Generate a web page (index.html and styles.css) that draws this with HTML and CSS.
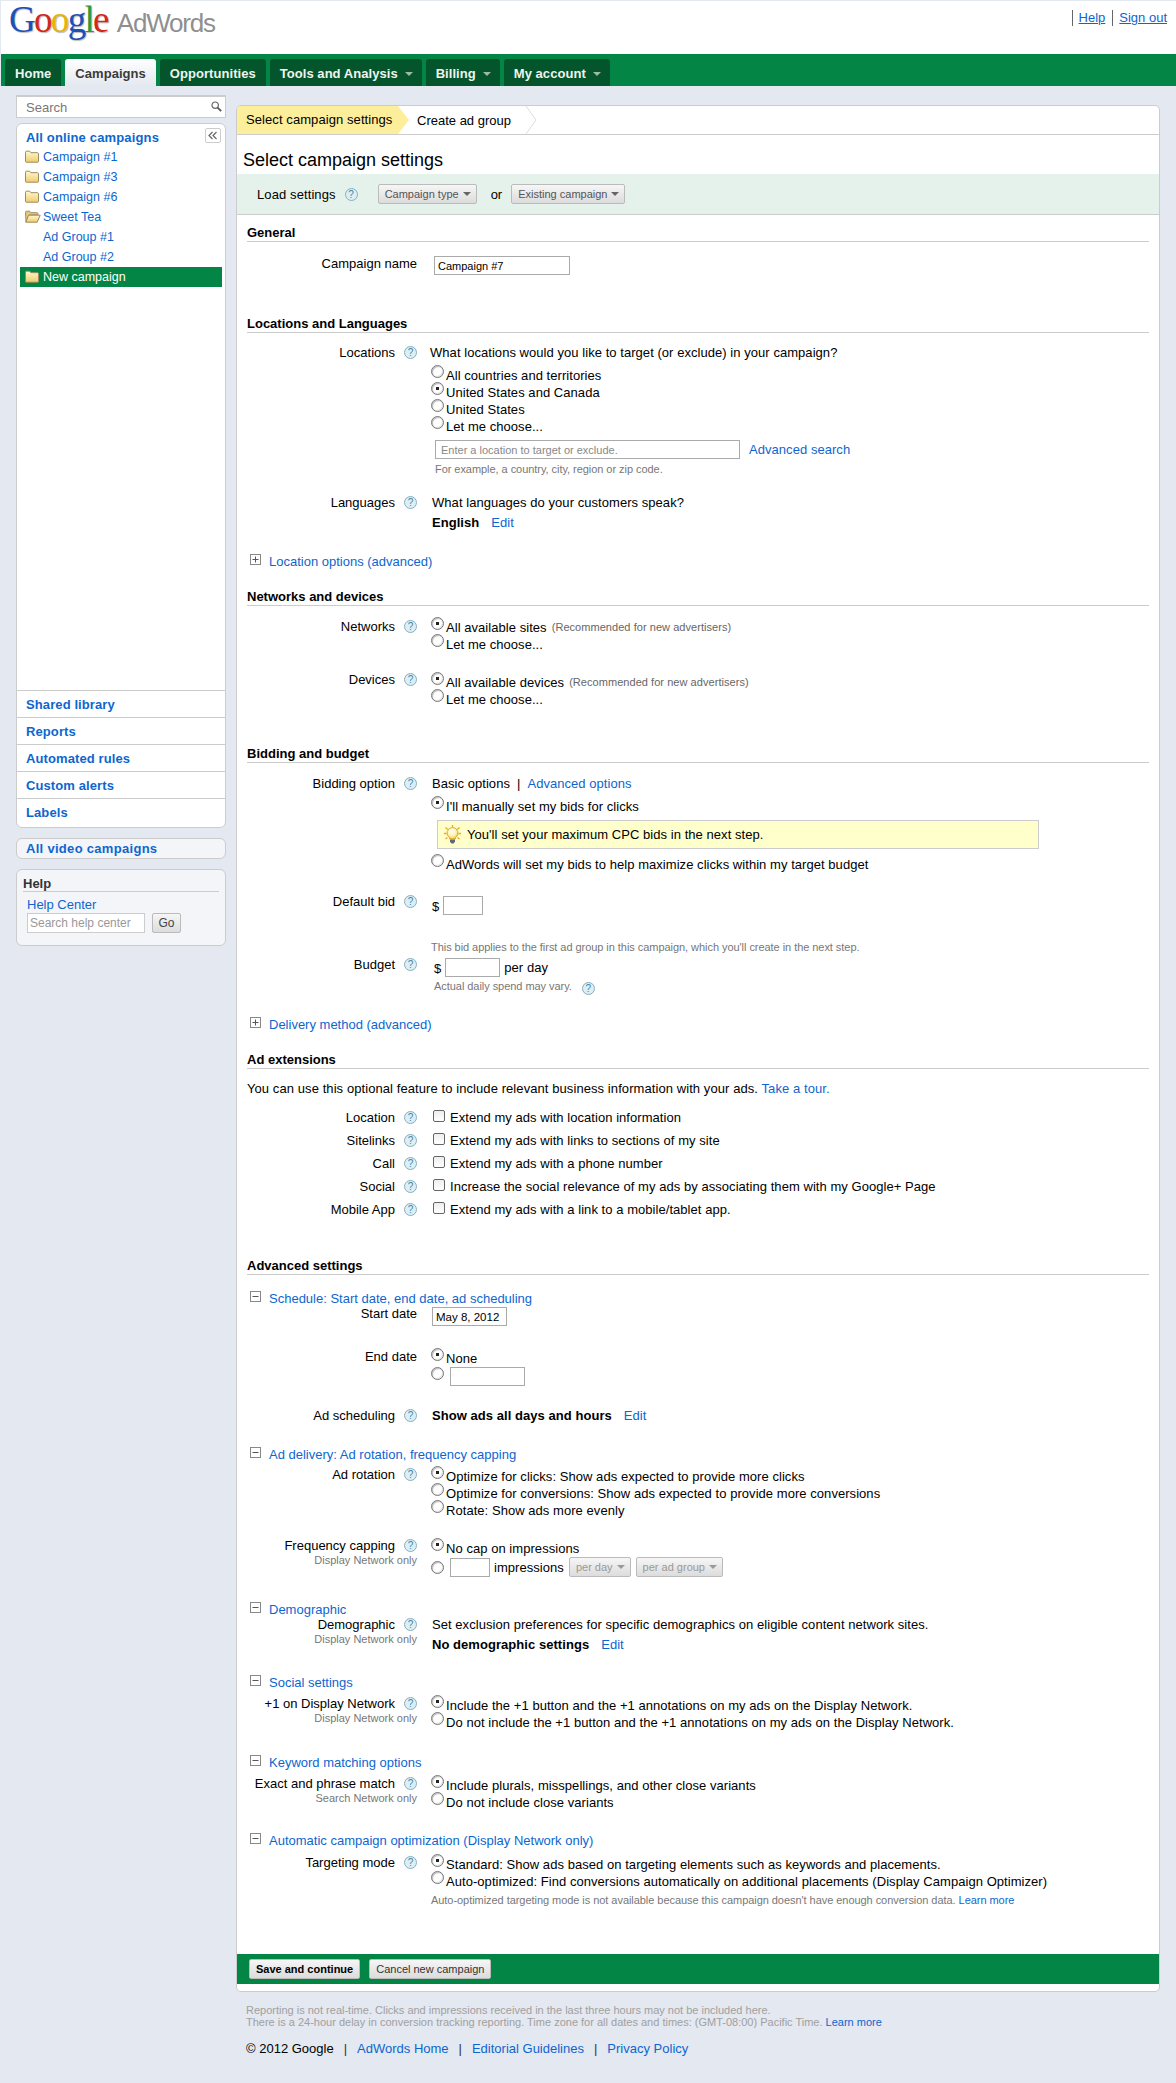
FILE: index.html
```html
<!DOCTYPE html>
<html lang="en">
<head>
<meta charset="utf-8">
<title>Google AdWords</title>
<link rel="stylesheet" href="styles.css">
</head>
<body>
<svg class="defs" width="0" height="0">
  <defs>
    <linearGradient id="fold" x1="0" y1="0" x2="0" y2="1"><stop offset="0" stop-color="#fff9d2"/><stop offset="1" stop-color="#f0cc6c"/></linearGradient>
    <radialGradient id="bulb" cx=".45" cy=".35" r=".65"><stop offset="0" stop-color="#fff"/><stop offset=".6" stop-color="#fff3b0"/><stop offset="1" stop-color="#f2c63c"/></radialGradient>
    <symbol id="folder" viewBox="0 0 14 13"><path d="M.5 2.200c0-.6.4-1 1-1h3.200l1.200 1.500h6.600c.6 0 1 .4 1 1v7.800c0 .4-.3.7-.7.7H1.200c-.4 0-.7-.3-.7-.7z" fill="url(#fold)" stroke="#9c8c60"/></symbol>
    <symbol id="folderopen" viewBox="0 0 16 13"><path d="M.5 2.200c0-.6.4-1 1-1h3.200l1.200 1.500h6c.6 0 1 .4 1 1V5H4L1 12z" fill="#e6c878" stroke="#9c8c60"/><path d="M3.600 5.200h11.600l-3 7H.8z" fill="url(#fold)" stroke="#9c8c60"/></symbol>
    <symbol id="plus" viewBox="0 0 11 11"><rect x=".5" y=".5" width="10" height="10" fill="#fff" stroke="#888"/><path d="M2.500 5.500h6M5.500 2.500v6" stroke="#555"/></symbol>
    <symbol id="minus" viewBox="0 0 11 11"><rect x=".5" y=".5" width="10" height="10" fill="#fff" stroke="#888"/><path d="M2.500 5.500h6" stroke="#555"/></symbol>
  </defs>
</svg>
<header class="top">
  <div class="logo"><span class="g1">G</span><span class="g2">o</span><span class="g3">o</span><span class="g1">g</span><span class="g4">l</span><span class="g2">e</span><span class="adw">AdWords</span></div>
  <nav class="toplinks"><a href="#">Help</a><a href="#">Sign out</a></nav>
</header>
<nav class="tabs">
  <a class="tab" href="#">Home</a>
  <a class="tab on" href="#">Campaigns</a>
  <a class="tab" href="#">Opportunities</a>
  <a class="tab" href="#">Tools and Analysis<i class="tarr"></i></a>
  <a class="tab" href="#">Billing<i class="tarr"></i></a>
  <a class="tab" href="#">My account<i class="tarr"></i></a>
</nav>
<div class="page">
  <aside class="side">
    <div class="search"><span>Search</span>
      <svg width="11" height="11" viewBox="0 0 11 11"><circle cx="4.200" cy="4.200" r="3.200" fill="#fff" stroke="#666" stroke-width="1.200"/><path d="M6.600 6.600l3.600 3.600" stroke="#555" stroke-width="1.800"/></svg>
    </div>
    <div class="sbox">
      <div class="tree">
        <a class="thead" href="#">All online campaigns</a>
        <button class="coll" type="button"><svg width="10" height="9" viewBox="0 0 10 9"><path d="M4.500 1L1 4.500 4.500 8M8.500 1L5 4.500 8.500 8" fill="none" stroke="#666" stroke-width="1.200"/></svg></button>
        <a class="titem" href="#"><svg class="fi" width="14" height="13"><use href="#folder"/></svg>Campaign #1</a>
        <a class="titem" href="#"><svg class="fi" width="14" height="13"><use href="#folder"/></svg>Campaign #3</a>
        <a class="titem" href="#"><svg class="fi" width="14" height="13"><use href="#folder"/></svg>Campaign #6</a>
        <a class="titem" href="#"><svg class="fi open" width="16" height="13"><use href="#folderopen"/></svg>Sweet Tea</a>
        <a class="titem sub" href="#">Ad Group #1</a>
        <a class="titem sub" href="#">Ad Group #2</a>
        <a class="titem cur" href="#"><svg class="fi" width="14" height="13"><use href="#folder"/></svg>New campaign</a>
      </div>
      <a class="snav" href="#">Shared library</a>
      <a class="snav" href="#">Reports</a>
      <a class="snav" href="#">Automated rules</a>
      <a class="snav" href="#">Custom alerts</a>
      <a class="snav" href="#">Labels</a>
    </div>
    <a class="video" href="#">All video campaigns</a>
    <div class="helpbox">
      <div class="helphead">Help</div>
      <a class="helplink" href="#">Help Center</a>
      <div class="helpsearch"><input class="helpinput" placeholder="Search help center"><button class="btn gobtn" type="button">Go</button></div>
    </div>
  </aside>
  <main class="panel">
    <div class="steps"><div class="step1">Select campaign settings</div><div class="step2">Create ad group
      <svg width="12" height="28" viewBox="0 0 12 28"><path d="M1 0l10 14L1 28" fill="none" stroke="#ddd"/></svg></div></div>
    <h1 class="title">Select campaign settings</h1>
    <div class="load">
      <span class="loadlab">Load settings</span><i class="q">?</i>
      <button class="btn sel b1" type="button">Campaign type<i class="arr"></i></button>
      <span class="or">or</span>
      <button class="btn sel" type="button">Existing campaign<i class="arr"></i></button>
    </div>
    <div class="form">
      <h2 class="sec mt-10">General</h2>
      <div class="row mt-13"><div class="lab">Campaign name</div><div class="val"><input class="txt w-name pl-3" value="Campaign #7"></div></div>

      <h2 class="sec mt-41">Locations and Languages</h2>
      <div class="row mt-11"><div class="lab">Locations<i class="q">?</i></div>
        <div class="val">
          <div class="line ml-n1">What locations would you like to target (or exclude) in your campaign?</div>
          <label class="rad mt-6"><input type="radio" name="l">All countries and territories</label>
          <label class="rad"><input type="radio" name="l" checked>United States and Canada</label>
          <label class="rad"><input type="radio" name="l">United States</label>
          <label class="rad"><input type="radio" name="l">Let me choose...</label>
          <div class="locs"><input class="txt w-loc" placeholder="Enter a location to target or exclude."><a href="#">Advanced search</a></div>
          <div class="hint pl-4">For example, a country, city, region or zip code.</div>
        </div>
      </div>
      <div class="row mt-17"><div class="lab">Languages<i class="q">?</i></div>
        <div class="val">
          <div class="line pl-1">What languages do your customers speak?</div>
          <div class="line pl-1 mt-3"><b>English</b><a class="edit" href="#">Edit</a></div>
        </div>
      </div>
      <div class="exp mt-22"><svg width="11" height="11"><use href="#plus"/></svg><a href="#">Location options (advanced)</a></div>

      <h2 class="sec mt-19">Networks and devices</h2>
      <div class="row mt-12"><div class="lab">Networks<i class="q">?</i></div>
        <div class="val pt-1">
          <label class="rad"><input type="radio" name="n" checked>All available sites<small class="rec">(Recommended for new advertisers)</small></label>
          <label class="rad"><input type="radio" name="n">Let me choose...</label>
        </div>
      </div>
      <div class="row mt-18"><div class="lab">Devices<i class="q">?</i></div>
        <div class="val pt-3">
          <label class="rad"><input type="radio" name="d" checked>All available devices<small class="rec">(Recommended for new advertisers)</small></label>
          <label class="rad"><input type="radio" name="d">Let me choose...</label>
        </div>
      </div>

      <h2 class="sec mt-38">Bidding and budget</h2>
      <div class="row mt-12"><div class="lab">Bidding option<i class="q">?</i></div>
        <div class="val">
          <div class="line pl-1">Basic options<span class="pipe">|</span><a href="#">Advanced options</a></div>
          <label class="rad mt-6"><input type="radio" name="b" checked>I'll manually set my bids for clicks</label>
          <div class="tip">
            <svg width="17" height="19" viewBox="0 0 17 19"><path d="M8.500 0v2.500M1.500 2.500l2.200 2M15.500 2.500l-2.200 2M0 8.500h2.500M14.500 8.500H17M1.500 14l2-1.500M15.500 14l-2-1.500" stroke="#eda81e" stroke-width="1.300"/><path d="M8.500 2.500a5.500 5.500 0 0 0-3 10.100V14h6v-1.400a5.500 5.500 0 0 0-3-10.100z" fill="url(#bulb)" stroke="#caa02a" stroke-width=".8"/><path d="M6 14.500h5v2.200L9.500 18.500h-2L6 16.700z" fill="#667"/></svg>
            <span>You'll set your maximum CPC bids in the next step.</span>
          </div>
          <label class="rad mt-7"><input type="radio" name="b">AdWords will set my bids to help maximize clicks within my target budget</label>
        </div>
      </div>
      <div class="row mt-20"><div class="lab">Default bid<i class="q">?</i></div>
        <div class="val money pt-3"><span class="cur1">$</span><input class="txt w-bid"></div>
      </div>
      <div class="row mt-22"><div></div><div class="val"><div class="hint">This bid applies to the first ad group in this campaign, which you'll create in the next step.</div></div></div>
      <div class="row mt-1"><div class="lab">Budget<i class="q">?</i></div>
        <div class="val">
          <div class="money pt-2 pl-3"><span class="cur2">$</span><input class="txt w-budget"><span class="perday">per day</span></div>
          <div class="hint hint1 pl-3">Actual daily spend may vary.<i class="q qh">?</i></div>
        </div>
      </div>
      <div class="exp mt-21"><svg width="11" height="11"><use href="#plus"/></svg><a href="#">Delivery method (advanced)</a></div>

      <h2 class="sec mt-19">Ad extensions</h2>
      <div class="line wide mt-11">You can use this optional feature to include relevant business information with your ads. <a href="#">Take a tour.</a></div>
      <div class="row mt-12"><div class="lab">Location<i class="q">?</i></div><div class="val"><label class="chk"><input type="checkbox">Extend my ads with location information</label></div></div>
      <div class="row mt-6"><div class="lab">Sitelinks<i class="q">?</i></div><div class="val"><label class="chk"><input type="checkbox">Extend my ads with links to sections of my site</label></div></div>
      <div class="row mt-6"><div class="lab">Call<i class="q">?</i></div><div class="val"><label class="chk"><input type="checkbox">Extend my ads with a phone number</label></div></div>
      <div class="row mt-6"><div class="lab">Social<i class="q">?</i></div><div class="val"><label class="chk"><input type="checkbox">Increase the social relevance of my ads by associating them with my Google+ Page</label></div></div>
      <div class="row mt-6"><div class="lab">Mobile App<i class="q">?</i></div><div class="val"><label class="chk"><input type="checkbox">Extend my ads with a link to a mobile/tablet app.</label></div></div>

      <h2 class="sec mt-40">Advanced settings</h2>
      <div class="exp mt-15"><svg width="11" height="11"><use href="#minus"/></svg><a href="#">Schedule: Start date, end date, ad scheduling</a></div>
      <div class="row mt-n2"><div class="lab">Start date</div><div class="val pt-2"><input class="txt w-date pl-3" value="May 8, 2012"></div></div>
      <div class="row mt-22"><div class="lab">End date</div>
        <div class="val pt-2">
          <label class="rad"><input type="radio" name="e" checked>None</label>
          <div class="rad radfield"><input type="radio" name="e"><input class="txt w-end"></div>
        </div>
      </div>
      <div class="row mt-21"><div class="lab">Ad scheduling<i class="q">?</i></div><div class="val"><div class="line pl-1"><b>Show ads all days and hours</b><a class="edit" href="#">Edit</a></div></div></div>

      <div class="exp mt-22"><svg width="11" height="11"><use href="#minus"/></svg><a href="#">Ad delivery: Ad rotation, frequency capping</a></div>
      <div class="row mt-3"><div class="lab">Ad rotation<i class="q">?</i></div>
        <div class="val pt-2">
          <label class="rad"><input type="radio" name="r" checked>Optimize for clicks: Show ads expected to provide more clicks</label>
          <label class="rad"><input type="radio" name="r">Optimize for conversions: Show ads expected to provide more conversions</label>
          <label class="rad"><input type="radio" name="r">Rotate: Show ads more evenly</label>
        </div>
      </div>
      <div class="row mt-18"><div class="stack"><div class="lab">Frequency capping<i class="q">?</i></div><div class="sublab">Display Network only</div></div>
        <div class="val pt-3">
          <label class="rad"><input type="radio" name="f" checked>No cap on impressions</label>
          <div class="rad radfield freq"><input type="radio" name="f"><input class="txt w-bid"><span class="imp">impressions</span><button class="btn sel dis" type="button">per day<i class="arr"></i></button><button class="btn sel dis" type="button">per ad group<i class="arr"></i></button></div>
        </div>
      </div>

      <div class="exp mt-24"><svg width="11" height="11"><use href="#minus"/></svg><a href="#">Demographic</a></div>
      <div class="row mt-n2"><div class="stack"><div class="lab">Demographic<i class="q">?</i></div><div class="sublab">Display Network only</div></div>
        <div class="val">
          <div class="line pl-1">Set exclusion preferences for specific demographics on eligible content network sites.</div>
          <div class="line pl-1 mt-3"><b>No demographic settings</b><a class="edit" href="#">Edit</a></div>
        </div>
      </div>

      <div class="exp mt-21"><svg width="11" height="11"><use href="#minus"/></svg><a href="#">Social settings</a></div>
      <div class="row mt-4"><div class="stack"><div class="lab">+1 on Display Network<i class="q">?</i></div><div class="sublab">Display Network only</div></div>
        <div class="val pt-2">
          <label class="rad"><input type="radio" name="p" checked>Include the +1 button and the +1 annotations on my ads on the Display Network.</label>
          <label class="rad"><input type="radio" name="p">Do not include the +1 button and the +1 annotations on my ads on the Display Network.</label>
        </div>
      </div>

      <div class="exp mt-23"><svg width="11" height="11"><use href="#minus"/></svg><a href="#">Keyword matching options</a></div>
      <div class="row mt-4"><div class="stack"><div class="lab">Exact and phrase match<i class="q">?</i></div><div class="sublab">Search Network only</div></div>
        <div class="val pt-2">
          <label class="rad"><input type="radio" name="k" checked>Include plurals, misspellings, and other close variants</label>
          <label class="rad"><input type="radio" name="k">Do not include close variants</label>
        </div>
      </div>

      <div class="exp mt-21"><svg width="11" height="11"><use href="#minus"/></svg><a href="#">Automatic campaign optimization (Display Network only)</a></div>
      <div class="row mt-5"><div class="lab">Targeting mode<i class="q">?</i></div>
        <div class="val pt-2">
          <label class="rad"><input type="radio" name="t" checked>Standard: Show ads based on targeting elements such as keywords and placements.</label>
          <label class="rad"><input type="radio" name="t">Auto-optimized: Find conversions automatically on additional placements (Display Campaign Optimizer)</label>
          <div class="hint mt-2">Auto-optimized targeting mode is not available because this campaign doesn't have enough conversion data. <a href="#">Learn more</a></div>
        </div>
      </div>
    </div>
    <div class="actions">
      <button class="btn act bold" type="button">Save and continue</button>
      <button class="btn act" type="button">Cancel new campaign</button>
    </div>
  </main>
</div>
<footer class="foot">
  <p class="note">Reporting is not real-time. Clicks and impressions received in the last three hours may not be included here.<br>There is a 24-hour delay in conversion tracking reporting. Time zone for all dates and times: (GMT-08:00) Pacific Time. <a href="#">Learn more</a></p>
  <p class="legal"><span>© 2012 Google</span><i>|</i><a href="#">AdWords Home</a><i>|</i><a href="#">Editorial Guidelines</a><i>|</i><a href="#">Privacy Policy</a></p>
</footer>
</body>
</html>
```
FILE: styles.css
```css
* { box-sizing: border-box; }
html, body { margin: 0; padding: 0; }
body { background: #e4e8f0; font: 13px/17px "Liberation Sans", Arial, sans-serif; color: #000; padding: 1px 0 0 1px; height: 2083px; overflow: hidden; }
a { color: #0d66cf; text-decoration: none; }
h1, h2, p { margin: 0; }
.defs { position: absolute; }

.top { height: 53px; background: #fff; display: flex; justify-content: space-between; align-items: flex-start; }
.logo { font-family: "Liberation Serif", serif; font-size: 37px; line-height: 38px; letter-spacing: -1.700px; padding: 0 0 0 8px; text-shadow: 1px 1px 1px #bbb; display: flex; align-items: baseline; }
.g1 { color: #1c51b8; } .g2 { color: #d3281c; } .g3 { color: #e5b30b; } .g4 { color: #2d9a3b; }
.adw { font-family: "Liberation Sans", sans-serif; font-size: 26px; letter-spacing: -1.200px; color: #8f8f8f; margin-left: 9px; text-shadow: none; }
.toplinks { display: flex; padding: 9px 9px 0 0; }
.toplinks a { text-decoration: underline; border-left: 1px solid #666; margin-left: 7px; padding-left: 6px; line-height: 16px; }

.tabs { height: 32px; background: #038645; display: flex; gap: 4px; padding: 5px 0 0 4px; }
.tab { height: 27px; line-height: 29px; padding: 0 10px; background: #04552b; color: #eef4f0; font-weight: bold; letter-spacing: .05px; border-radius: 3px 3px 0 0; white-space: nowrap; }
.tab.on { background: linear-gradient(#fff, #e4e8f0); color: #3a3a3a; }
.tarr { display: inline-block; border: 4px solid transparent; border-top-color: #9fb8a8; border-bottom: 0; margin: 0 -1px 0 7px; vertical-align: 2px; }

.page { display: flex; align-items: flex-start; }
.side { width: 210px; margin: 9px 0 0 15px; flex: none; }
.search { height: 23px; background: #fff; border: 1px solid #ccc; border-width: 2px 1px 1px; display: flex; justify-content: space-between; align-items: center; padding: 1px 3px 0 9px; color: #777; }
.search svg { margin-bottom: 3px; }
.sbox { margin-top: 5px; background: #fff; border: 1px solid #ccc; border-radius: 6px; overflow: hidden; }
.tree { height: 566px; padding: 5px 3px 0; position: relative; }
.thead { display: block; height: 18px; padding-left: 6px; font-weight: bold; letter-spacing: .15px; }
.coll { position: absolute; top: 4px; right: 4px; width: 16px; height: 15px; padding: 0; background: #fff; border: 1px solid #ccc; border-radius: 2px; display: flex; align-items: center; justify-content: center; }
.titem { display: flex; align-items: center; height: 20px; padding-left: 5px; font-size: 12.500px; }
.titem .fi { margin-right: 4px; flex: none; margin-top: -2px; }
.titem .open { margin-right: 2px; }
.titem.sub { padding-left: 23px; }
.titem.cur { background: #038645; color: #fff; }
.snav { display: block; height: 27px; line-height: 27px; border-top: 1px solid #ccc; padding-left: 9px; font-weight: bold; letter-spacing: .1px; }
.snav:last-child { height: 29px; }
.video { display: block; height: 21px; line-height: 19px; margin-top: 10px; background: #f4f5f9; border: 1px solid #ccc; border-radius: 6px; padding-left: 9px; font-weight: bold; letter-spacing: .3px; }
.helpbox { height: 77px; margin-top: 10px; padding: 6px 6px 0; background: #f4f5f9; border: 1px solid #ccc; border-radius: 6px; }
.helphead { height: 16px; line-height: 15px; font-weight: bold; color: #333; border-bottom: 1px solid #ccc; }
.helplink { display: block; margin: 5px 0 0 4px; line-height: 15px; }
.helpsearch { display: flex; margin: 1px 0 0 4px; gap: 7px; }
.helpinput { width: 118px; height: 20px; border: 1px solid #ccc; padding: 0 2px; font: 12px "Liberation Sans", sans-serif; background: #fff; }
.helpinput::placeholder { color: #999; opacity: 1; }

.btn { font: 11px "Liberation Sans", sans-serif; color: #333; background: linear-gradient(#f6f6f6, #dcdcdc); border: 1px solid #bbb; border-radius: 2px; padding: 0; }
.gobtn { width: 29px; height: 20px; font-size: 12px; color: #444; }
.sel { height: 20px; padding: 0 5px 0 6px; display: inline-flex; align-items: center; white-space: nowrap; color: #555; }
.arr { display: inline-block; border: 4px solid transparent; border-top: 4px solid #666; border-bottom: 0; margin-left: 4px; }
.dis { color: #999; }
.dis .arr { border-top-color: #999; }

.panel { width: 924px; margin: 19px 0 0 10px; background: #fff; border: 1px solid #ccc; border-radius: 5px; flex: none; height: 1887px; overflow: hidden; }
.steps { height: 29px; border-bottom: 1px solid #ccc; display: flex; }
.step1 { width: 173px; height: 28px; line-height: 28px; padding-left: 9px; letter-spacing: .08px; background: #fdee9b; clip-path: polygon(0 0, 161px 0, 172px 50%, 161px 100%, 0 100%); }
.step2 { display: flex; align-items: center; padding-left: 7px; gap: 14px; height: 28px; }
.title { height: 39px; padding: 11px 0 0 6px; font-size: 18px; line-height: 28px; font-weight: normal; }
.load { height: 41px; background: #e5f2ec; border-bottom: 1px solid #ccc; display: flex; align-items: center; padding-left: 20px; }
.load .q { margin-left: 9px; }
.loadlab { letter-spacing: .1px; }
.b1 { margin-left: 20px; }
.or { margin: 0 9px 0 14px; }

.q { display: inline-block; width: 13px; height: 13px; margin-left: 9px; flex: none; border: 1px solid #88aebc; border-radius: 50%; background: #dceff5; color: #3f89ad; font: normal 10px/11px "Liberation Sans", sans-serif; text-align: center; letter-spacing: 0; }
.qh { margin-left: 10px; vertical-align: -2px; }

.form { padding: 0 10px; }
.sec { height: 17px; line-height: 16px; font-size: 13px; font-weight: bold; border-bottom: 1px solid #ccc; }
.row { display: grid; grid-template-columns: 170px 1fr; }
.lab { display: flex; justify-content: flex-end; align-items: center; height: 17px; white-space: nowrap; }
.sublab { text-align: right; font-size: 11px; line-height: 13px; color: #777; }
.val { padding-left: 14px; min-width: 0; letter-spacing: .05px; }
.line { min-height: 17px; }
.wide { letter-spacing: .08px; }
.rad { display: flex; height: 17px; white-space: nowrap; }
.rad input[type=radio] { appearance: none; flex: none; width: 13px; height: 13px; margin: -2px 2px 0 0; border: 1px solid #777; border-radius: 50%; background: #fff; box-shadow: inset 1px 1px 1px #bbb, inset -1px -1px 1px #e4e4e4; }
.rad input[type=radio]:checked { background: radial-gradient(circle, #222 0 1.500px, #fff 2px); }
.radfield { height: 19px; align-items: flex-start; }
.radfield input[type=radio] { margin: 0 6px 0 0; }
.freq { height: 20px; }
.freq input[type=radio] { margin-top: 4px; }
.freq .txt { margin-top: 1px; }
.imp { margin: 2px 5px 0 4px; }
.freq .btn { margin-right: 5px; }
.rec { font-size: 11px; color: #666; margin-left: 5px; letter-spacing: .05px; }
.chk { display: flex; height: 17px; white-space: nowrap; }
.chk input { appearance: none; flex: none; width: 12px; height: 12px; margin: 1px 5px 0 2px; border: 1px solid #666; border-radius: 2px; background: linear-gradient(#eee, #fff); }
.txt { height: 19px; border: 1px solid #aaa; background: #fff; padding: 0 2px; font: 12px "Liberation Sans", sans-serif; color: #000; display: block; }
.txt::placeholder { color: #888; opacity: 1; }
.w-name { width: 136px; margin-left: 3px; margin-top: 1px; font-size: 11px; }
.w-loc { width: 305px; padding-left: 5px; font-size: 11px; }
.w-bid { width: 40px; }
.w-budget { width: 55px; }
.w-date { width: 75px; margin-left: 1px; font-size: 11.500px; }
.w-end { width: 75px; }
.locs { display: flex; gap: 9px; align-items: center; margin: 5px 0 0 4px; }
.hint { font-size: 11px; line-height: 16px; color: #777; margin-top: 2px; white-space: nowrap; letter-spacing: -.05px; }
.hint1 { margin-top: 1px; }
.edit { margin-left: 12px; }
.pipe { margin: 0 7px; }
.exp { display: flex; height: 17px; padding-left: 3px; }
.exp svg { margin: 1px 8px 0 0; flex: none; }
.tip { width: 602px; height: 29px; margin: 5px 0 0 6px; display: flex; align-items: center; padding-left: 6px; gap: 6px; background: #ffc; border: 1px solid #ccc; }
.money { display: flex; align-items: flex-start; }
.cur1 { margin: 2px 4px 0 1px; }
.cur2 { margin: 2px 4px 0 0; }
.perday { margin: 1px 0 0 4px; }

.mt-n2 { margin-top: -2px; } .mt-n1 { margin-top: -1px; }
.mt-1 { margin-top: 1px; } .mt-2 { margin-top: 2px; } .mt-3 { margin-top: 3px; } .mt-4 { margin-top: 4px; } .mt-5 { margin-top: 5px; } .mt-6 { margin-top: 6px; } .mt-7 { margin-top: 7px; }
.mt-10 { margin-top: 10px; } .mt-11 { margin-top: 11px; } .mt-12 { margin-top: 12px; } .mt-13 { margin-top: 13px; } .mt-15 { margin-top: 15px; } .mt-17 { margin-top: 17px; } .mt-18 { margin-top: 18px; } .mt-19 { margin-top: 19px; } .mt-20 { margin-top: 20px; } .mt-21 { margin-top: 21px; } .mt-22 { margin-top: 22px; } .mt-23 { margin-top: 23px; } .mt-24 { margin-top: 24px; } .mt-38 { margin-top: 38px; } .mt-40 { margin-top: 40px; } .mt-41 { margin-top: 41px; }
.pt-1 { padding-top: 1px; } .pt-2 { padding-top: 2px; } .pt-3 { padding-top: 3px; }
.pl-1 { padding-left: 1px; } .pl-3 { padding-left: 3px; } .pl-4 { padding-left: 4px; }
.ml-n1 { margin-left: -1px; }

.actions { height: 30px; margin-top: 46px; background: #038645; display: flex; align-items: center; gap: 9px; padding: 0 0 0 12px; }
.act { height: 20px; padding: 0 6px; font-size: 11px; color: #333; }
.bold { font-weight: bold; color: #000; }

.foot { margin: 12px 0 0 245px; }
.note { font-size: 11px; line-height: 12px; color: #a0a0a0; }
.note a { color: #0d66cf; }
.legal { margin-top: 12px; font-size: 13px; line-height: 17px; }
.legal i { font-style: normal; margin: 0 10px; color: #333; }
```
